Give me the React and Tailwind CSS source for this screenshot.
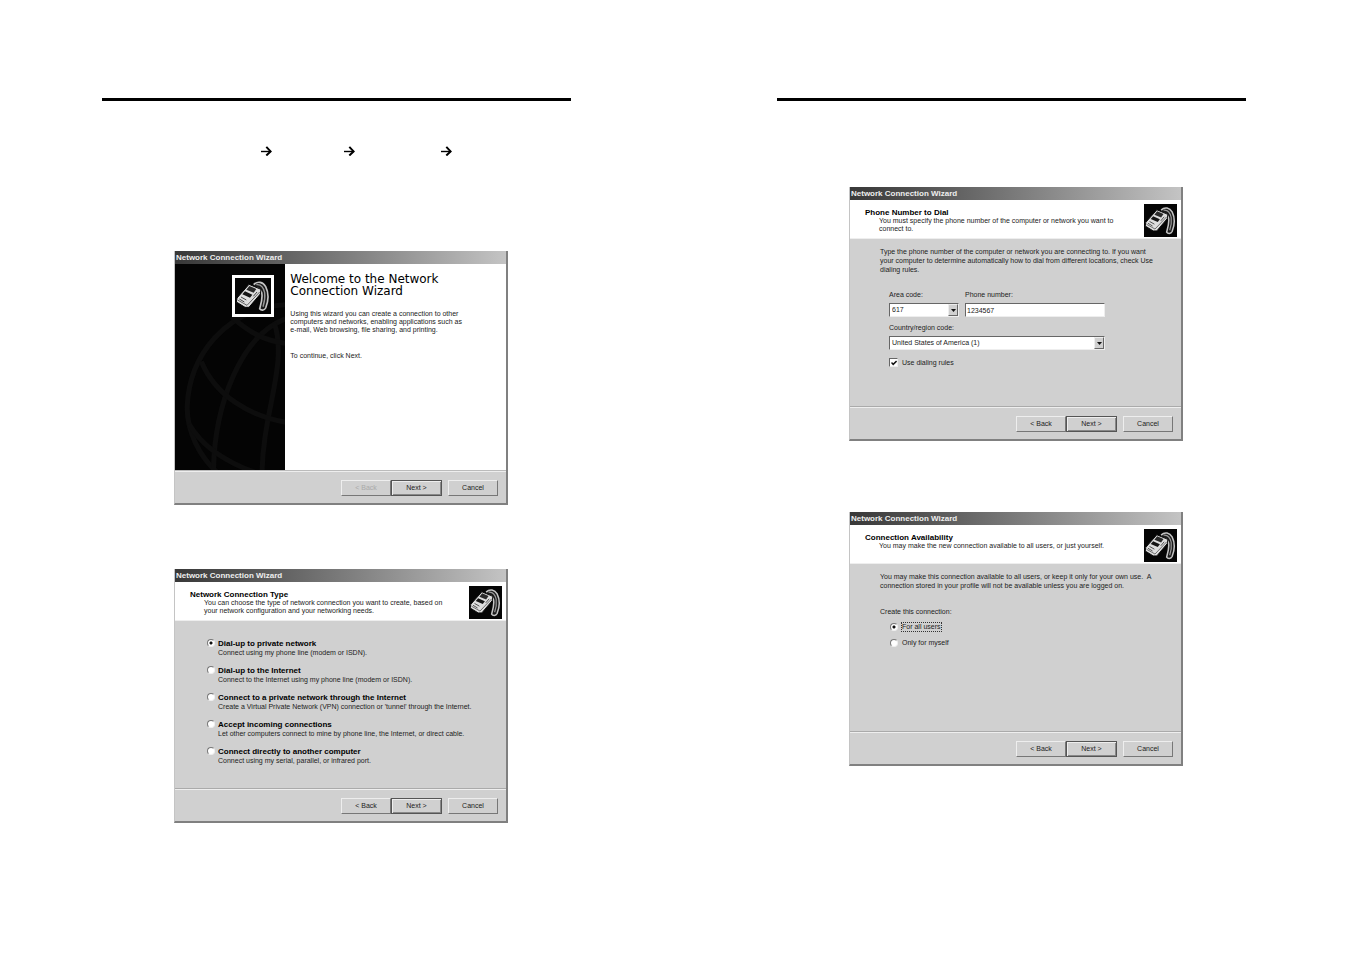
import React, { useState } from 'react'

const connectionTypes = [
  { id: 'private', title: 'Dial-up to private network', description: 'Connect using my phone line (modem or ISDN).' },
  { id: 'internet', title: 'Dial-up to the Internet', description: 'Connect to the Internet using my phone line (modem or ISDN).' },
  { id: 'vpn', title: 'Connect to a private network through the Internet', description: "Create a Virtual Private Network (VPN) connection or 'tunnel' through the Internet." },
  { id: 'incoming', title: 'Accept incoming connections', description: 'Let other computers connect to mine by phone line, the Internet, or direct cable.' },
  { id: 'direct', title: 'Connect directly to another computer', description: 'Connect using my serial, parallel, or infrared port.' }
]

const Arrow = ({ className = '' }) => (
  <svg className={className} width="11" height="10" viewBox="0 0 11 10" fill="none" stroke="#000" aria-hidden="true">
    <path d="M0 5.5H10" strokeWidth="1.4" />
    <path d="M5.3 0.9L9.6 5.4L5.3 9.5" strokeWidth="2" />
  </svg>
)

const PhoneIcon = ({ className = '' }) => (
  <svg className={className} viewBox="0 0 108 108" aria-hidden="true">
    <rect width="108" height="108" fill="#050505" />
    {/* Handset and cord */}
    <path d="M56 20C68 8 84 12 92 26C102 46 100 70 92 90C88 98 78 98 74 92C78 78 84 60 80 44C76 34 68 30 60 32" fill="#1a1a1a" stroke="#c4c4c4" strokeWidth="5" strokeLinejoin="round" />
    <path d="M64 20C78 18 86 30 89 44C91 60 88 74 84 86" fill="none" stroke="#999" strokeWidth="4" />
    {/* Phone body */}
    <path d="M42 19L78 34L76 48L42 88L30 88L4 72L6 60Z" fill="#dedede" stroke="#050505" strokeWidth="3" />
    <path d="M43 24L64 33L56 44L34 35Z" fill="#2a2a2a" />
    <path d="M30 40L52 50L45 59L22 49Z" fill="#151515" />
    <path d="M8 66L36 82L74 42" fill="none" stroke="#666" strokeWidth="3" />
    <path d="M18 57L34 66M13 63L28 72M55 55L66 42" fill="none" stroke="#444" strokeWidth="3" />
  </svg>
)

const GlobeLines = () => (
  <svg className="absolute inset-0 h-full w-full" viewBox="0 0 109 207" preserveAspectRatio="xMidYMid slice" fill="none" stroke="#0d0d0d" strokeWidth="5" aria-hidden="true">
    <path d="M109 42C50 46 14 92 12 143C12 168 24 192 44 210" />
    <path d="M109 56C66 72 38 140 38 210" />
    <path d="M98 60C112 100 86 150 86 210" />
    <path d="M26 98C40 132 74 152 109 158" />
    <path d="M14 160C28 184 52 198 80 208" />
    <path d="M56 54C76 72 92 78 109 80" />
  </svg>
)

const WizardButton = ({ children, isDefault = false, disabled = false }) => (
  <button
    type="button"
    disabled={disabled}
    className={`h-4 border text-center leading-[8px] ${
      isDefault
        ? 'w-[51px] border-[#555] shadow-[inset_1px_1px_0_#eee,inset_-1px_-1px_0_#888]'
        : 'w-[50px] border-t-[#eee] border-l-[#eee] border-r-[#777] border-b-[#777]'
    } ${disabled ? 'text-[#aaa]' : 'text-[#222]'}`}
  >
    {children}
  </button>
)

const WizardWindow = ({ children, backDisabled = false }) => (
  <section className="flex min-h-[254px] w-full max-w-[334px] flex-col border-r-2 border-b-2 border-l border-r-[#808080] border-b-[#808080] border-l-[#c4c4c4] bg-[#d0d0d0] text-[7px] leading-[8px] text-[#222]">
    <h2 className="flex h-[13px] items-center bg-linear-to-r from-[#383838] to-[#c4c4c4] px-px text-[8px] font-bold text-[#eee]">
      Network Connection Wizard
    </h2>
    {children}
    <footer className="flex h-8 items-center justify-end border-t border-[#eee] pt-px pr-2">
      <WizardButton disabled={backDisabled}>&lt; Back</WizardButton>
      <WizardButton isDefault>Next &gt;</WizardButton>
      <span className="w-1.5" />
      <WizardButton>Cancel</WizardButton>
    </footer>
  </section>
)

const WizardHeader = ({ title, children }) => (
  <header className="flex h-[39px] items-start justify-between border-b border-[#eee] bg-white pr-1 pl-[15px]">
    <div className="pt-2">
      <h3 className="text-[8px] leading-[9px] font-bold text-black">{title}</h3>
      <p className="w-[256px] pl-3.5">{children}</p>
    </div>
    <PhoneIcon className="mt-1 h-[33px] w-[33px]" />
  </header>
)

const Radio = ({ id, name, checked, onChange }) => (
  <input
    type="radio"
    id={id}
    name={name}
    checked={checked}
    onChange={onChange}
    className="m-0 h-2 w-2 shrink-0 appearance-none rounded-full border border-t-[#777] border-r-[#eee] border-b-[#eee] border-l-[#777] bg-white checked:bg-[radial-gradient(circle,#111_0_1px,#fff_2px)]"
  />
)

const SelectBox = ({ id, children }) => (
  <div className="relative">
    <select
      id={id}
      className="block h-[14px] w-full appearance-none border border-t-[#666] border-r-[#eee] border-b-[#eee] border-l-[#666] bg-white pl-0.5 leading-[8px]"
    >
      {children}
    </select>
    <span className="pointer-events-none absolute top-px right-px flex h-3 w-2.5 items-center justify-center border border-t-[#eee] border-r-[#666] border-b-[#666] border-l-[#eee] bg-[#d0d0d0]">
      <svg width="5" height="3" viewBox="0 0 5 3" aria-hidden="true">
        <path d="M0 0H5L2.5 3Z" fill="#111" />
      </svg>
    </span>
  </div>
)

const WelcomeWindow = () => (
  <WizardWindow backDisabled>
    <div className="flex flex-1 border-b border-[#bbb] bg-white">
      <div className="relative w-1/3 bg-[#040404]">
        <GlobeLines />
        <PhoneIcon className="relative mt-[11px] mr-[11px] ml-auto h-[42px] w-[42px] border-3 border-white" />
      </div>
      <div className="flex-1 pt-[9px] pl-[5px]">
        <h3 className="font-['DejaVu_Sans',sans-serif] text-[12px] leading-[12px] text-black">
          Welcome to the Network
          <br />
          Connection Wizard
        </h3>
        <p className="mt-[13px] w-[178px]">
          Using this wizard you can create a connection to other computers and networks, enabling applications such as <span className="whitespace-nowrap">e-mail,</span> Web browsing, file sharing, and printing.
        </p>
        <p className="mt-[18px]">To continue, click Next.</p>
      </div>
    </div>
  </WizardWindow>
)

const ConnectionTypeWindow = () => {
  const [selected, setSelected] = useState('private')

  return (
    <WizardWindow>
      <WizardHeader title="Network Connection Type">
        You can choose the type of network connection you want to create, based on your network configuration and your networking needs.
      </WizardHeader>
      <div className="flex flex-1 flex-col gap-[9px] border-b border-[#aaa] pt-[18px] pl-8">
        {connectionTypes.map((type) => (
          <div key={type.id} className="flex gap-[3px]">
            <Radio id={type.id} name="type" checked={selected === type.id} onChange={() => setSelected(type.id)} />
            <label htmlFor={type.id} className="leading-[9px]">
              <span className="block text-[8px] font-bold text-black">{type.title}</span>
              <span className="block">{type.description}</span>
            </label>
          </div>
        ))}
      </div>
    </WizardWindow>
  )
}

const PhoneNumberWindow = () => (
  <WizardWindow>
    <WizardHeader title="Phone Number to Dial">
      You must specify the phone number of the computer or network you want to connect to.
    </WizardHeader>
    <div className="flex-1 border-b border-[#aaa] pt-2 pl-[30px]">
      <p className="w-[280px] leading-[9px]">
        Type the phone number of the computer or network you are connecting to. If you want your computer to determine automatically how to dial from different locations, check Use dialing rules.
      </p>
      <div className="mt-[17px] ml-[9px] w-[216px]">
        <div className="flex gap-1.5">
          <div className="w-[70px]">
            <label htmlFor="area" className="block pb-1">Area code:</label>
            <SelectBox id="area">
              <option>617</option>
            </SelectBox>
          </div>
          <div className="flex-1">
            <label htmlFor="phone" className="block pb-1">Phone number:</label>
            <input
              id="phone"
              type="text"
              defaultValue="1234567"
              className="block h-[14px] w-full border border-t-[#666] border-r-[#eee] border-b-[#eee] border-l-[#666] bg-white px-px"
            />
          </div>
        </div>
        <label htmlFor="country" className="block pt-[7px] pb-1">Country/region code:</label>
        <SelectBox id="country">
          <option>United States of America (1)</option>
        </SelectBox>
        <label className="mt-2 flex items-center gap-1">
          <input type="checkbox" defaultChecked className="peer sr-only" />
          <span className="flex h-[9px] w-[9px] items-center justify-center border border-t-[#666] border-r-[#eee] border-b-[#eee] border-l-[#666] bg-white peer-checked:[&>svg]:block">
            <svg className="hidden" width="6" height="6" viewBox="0 0 6 6" fill="none" stroke="#111" strokeWidth="1.5" aria-hidden="true">
              <path d="M0.5 2.5L2.2 4.4L5.6 1" />
            </svg>
          </span>
          Use dialing rules
        </label>
      </div>
    </div>
  </WizardWindow>
)

const AvailabilityWindow = () => {
  const [users, setUsers] = useState('all')

  return (
    <WizardWindow>
      <WizardHeader title="Connection Availability">
        You may make the new connection available to all users, or just yourself.
      </WizardHeader>
      <div className="flex-1 border-b border-[#aaa] pt-2 pl-[30px]">
        <p className="w-[280px] leading-[9px]">
          You may make this connection available to all users, or keep it only for your own use.&nbsp; A connection stored in your profile will not be available unless you are logged on.
        </p>
        <p className="mt-[18px]">Create this connection:</p>
        <div className="mt-1.5 ml-2.5 flex flex-col items-start gap-1.5">
          <div className="flex items-center gap-[3px]">
            <Radio id="all" name="users" checked={users === 'all'} onChange={() => setUsers('all')} />
            <label htmlFor="all" className="border border-dotted border-[#333]">For all users</label>
          </div>
          <div className="flex items-center gap-[3px]">
            <Radio id="myself" name="users" checked={users === 'myself'} onChange={() => setUsers('myself')} />
            <label htmlFor="myself" className="border border-transparent">Only for myself</label>
          </div>
        </div>
      </div>
    </WizardWindow>
  )
}

export default function App() {
  return (
    <main className="grid min-h-screen grid-cols-[675fr_676fr] bg-white pt-[98px] font-['Liberation_Sans',sans-serif]">
      {/* Left page */}
      <div className="pr-[104px] pl-[102px]">
        <hr className="h-[3px] border-0 bg-black" />
        <div className="mt-[45px] flex pl-[159px]">
          <Arrow />
          <Arrow className="ml-[72px]" />
          <Arrow className="ml-[86px]" />
        </div>
        <div className="flex flex-col gap-16 pt-[95px] pl-[72px]">
          <WelcomeWindow />
          <ConnectionTypeWindow />
        </div>
      </div>

      {/* Right page */}
      <div className="pr-[105px] pl-[102px]">
        <hr className="h-[3px] border-0 bg-black" />
        <div className="flex flex-col gap-[71px] pt-[86px] pl-[72px]">
          <PhoneNumberWindow />
          <AvailabilityWindow />
        </div>
      </div>
    </main>
  )
}
